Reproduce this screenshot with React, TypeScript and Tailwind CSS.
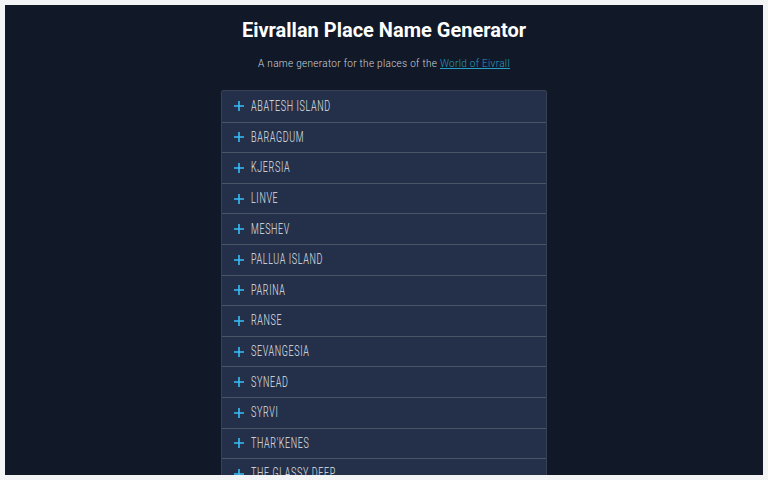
import React from "react";

const places = [
  "Abatesh Island",
  "Baragdum",
  "Kjersia",
  "Linve",
  "Meshev",
  "Pallua Island",
  "Parina",
  "Ranse",
  "Sevangesia",
  "Synead",
  "Syrvi",
  "Thar'kenes",
  "The Glassy Deep",
  "Tovrin",
];

function Plus() {
  return (
    <svg width="12" height="12" viewBox="0 0 12 12" className="shrink-0">
      <path d="M6 1v10M1 6h10" stroke="#38bdf8" strokeWidth="1.6" />
    </svg>
  );
}

function PlaceRow({ name }: { name: string }) {
  return (
    <div className="h-[30.6px] flex items-center gap-[6px] pl-[11px] border-t border-[#4a5568] first:border-t-0 bg-[#243049]">
      <Plus />
      <span className="inline-block origin-left scale-x-[0.64] text-[14px] font-light tracking-[1px] uppercase text-[#e2e6ec] whitespace-nowrap">
        {name}
      </span>
    </div>
  );
}

export default function App() {
  return (
    <div className="h-[480px] bg-[#f3f4f6] p-[5px]" style={{ fontFamily: "Roboto, sans-serif" }}>
      <div className="h-full bg-[#111827] overflow-hidden flex flex-col items-center">
        <h1 className="mt-[12px] text-[20px] leading-[26px] font-bold text-white">
          Eivrallan Place Name Generator
        </h1>
        <p className="mt-[15px] text-[10px] leading-[12px] font-light text-[#d0d4db] tracking-[0.3px]">
          A name generator for the places of the{" "}
          <a href="#" className="text-[#2a9fc4] underline">
            World of Eivrall
          </a>
        </p>
        <div className="mt-[20px] w-[326px] border border-[#374151] rounded-[2px]">
          {places.map((p) => (
            <PlaceRow key={p} name={p} />
          ))}
        </div>
      </div>
    </div>
  );
}
